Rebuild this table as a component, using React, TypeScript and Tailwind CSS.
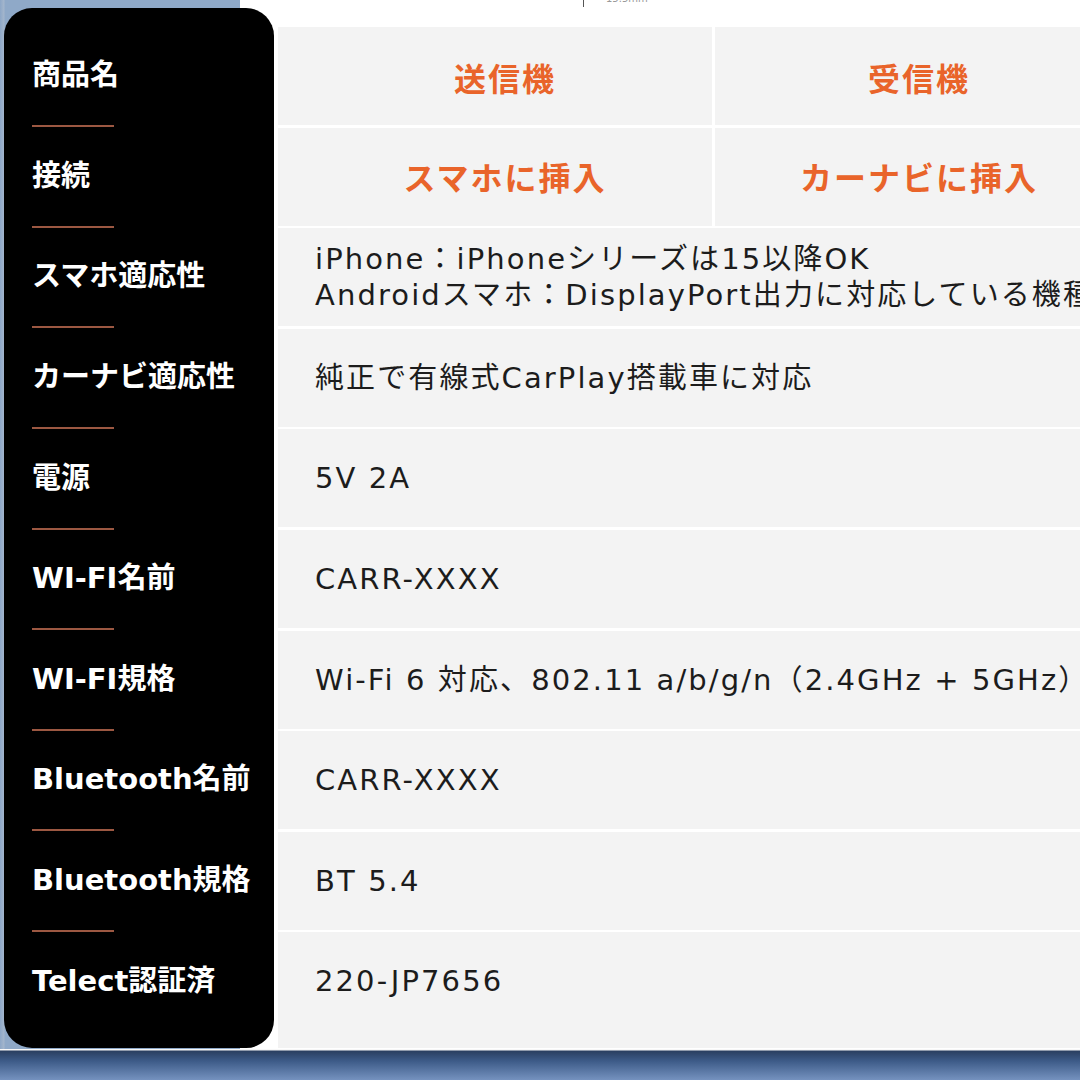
import React from 'react';

const labels = [
  '商品名',
  '接続',
  'スマホ適応性',
  'カーナビ適応性',
  '電源',
  'WI-FI名前',
  'WI-FI規格',
  'Bluetooth名前',
  'Bluetooth規格',
  'Telect認証済',
];

const values: string[][] = [
  ['iPhone：iPhoneシリーズは15以降OK', 'Androidスマホ：DisplayPort出力に対応している機種'],
  ['純正で有線式CarPlay搭載車に対応'],
  ['5V 2A'],
  ['CARR-XXXX'],
  ['Wi-Fi 6 対応、802.11 a/b/g/n（2.4GHz + 5GHz）'],
  ['CARR-XXXX'],
  ['BT 5.4'],
  ['220-JP7656'],
];

export default function App() {
  return (
    <div className="w-[1080px] h-[1080px] overflow-hidden flex flex-col font-['DejaVu_Sans','Noto_Sans_CJK_JP',sans-serif]">
      <div className="flex h-[1049px] shrink-0 pl-[4px] bg-[linear-gradient(to_right,#8da7c7_0px,#a4b6cc_4px,#8fa9c8_5px,#8fa9c8_240px,#ffffff_240px)]">
        {/* black label panel */}
        <div className="w-[270px] shrink-0 mt-[8px] h-[1040px] bg-black rounded-[28px] pt-[19px] flex flex-col">
          {labels.map((label, i) => (
            <React.Fragment key={label}>
              <div className="h-[98px] flex items-center pl-[28px] text-[29px] font-bold text-white whitespace-nowrap">
                {label}
              </div>
              {i < labels.length - 1 && (
                <div className="h-[2.6px] flex items-center pl-[28px]">
                  <div className="w-[82px] h-[2px] bg-[#9c5842]" />
                </div>
              )}
            </React.Fragment>
          ))}
        </div>

        {/* spec table */}
        <div className="w-[849px] shrink-0 pl-[4px] flex flex-col">
          <div className="h-[27px] flex items-start pl-[305px]">
            <div className="w-px h-[7px] bg-[#555]" />
            <div className="ml-[22px] -mt-[9px] text-[10px] text-[#999]">15.5mm</div>
          </div>
          <div className="flex flex-col gap-[2.6px] bg-white">
            <div className="flex gap-[3px] h-[98px]">
              <div className="w-[434px] bg-[#f3f3f3] flex items-center justify-center pl-[20px] pt-[8px] text-[32px] font-bold tracking-[2px] text-[#e9642a]">
                送信機
              </div>
              <div className="flex-1 bg-[#f3f3f3] flex items-center justify-center pt-[8px] text-[32px] font-bold tracking-[2px] text-[#e9642a]">
                受信機
              </div>
            </div>
            <div className="flex gap-[3px] h-[98px]">
              <div className="w-[434px] bg-[#f3f3f3] flex items-center justify-center pl-[20px] pt-[4px] text-[32px] font-bold tracking-[2px] text-[#e9642a]">
                スマホに挿入
              </div>
              <div className="flex-1 bg-[#f3f3f3] flex items-center justify-center pt-[4px] text-[32px] font-bold tracking-[2px] text-[#e9642a]">
                カーナビに挿入
              </div>
            </div>
            {values.map((lines, i) => (
              <div
                key={i}
                className={`bg-[#f3f3f3] flex flex-col justify-center pl-[37px] text-[29px] leading-[36px] tracking-[2.1px] text-[#1c1c1c] whitespace-nowrap ${
                  i === values.length - 1 ? 'h-[115.6px] pb-[17.6px]' : 'h-[98px]'
                }`}
              >
                {lines.map((line) => (
                  <div key={line}>{line}</div>
                ))}
              </div>
            ))}
          </div>
        </div>
      </div>
      <div className="flex-1 bg-[linear-gradient(to_bottom,#f7f7f7_0px,#f7f7f7_1px,#2a3f60_2px,#3d5b88_12px,#7592bf_31px)]" />
    </div>
  );
}
